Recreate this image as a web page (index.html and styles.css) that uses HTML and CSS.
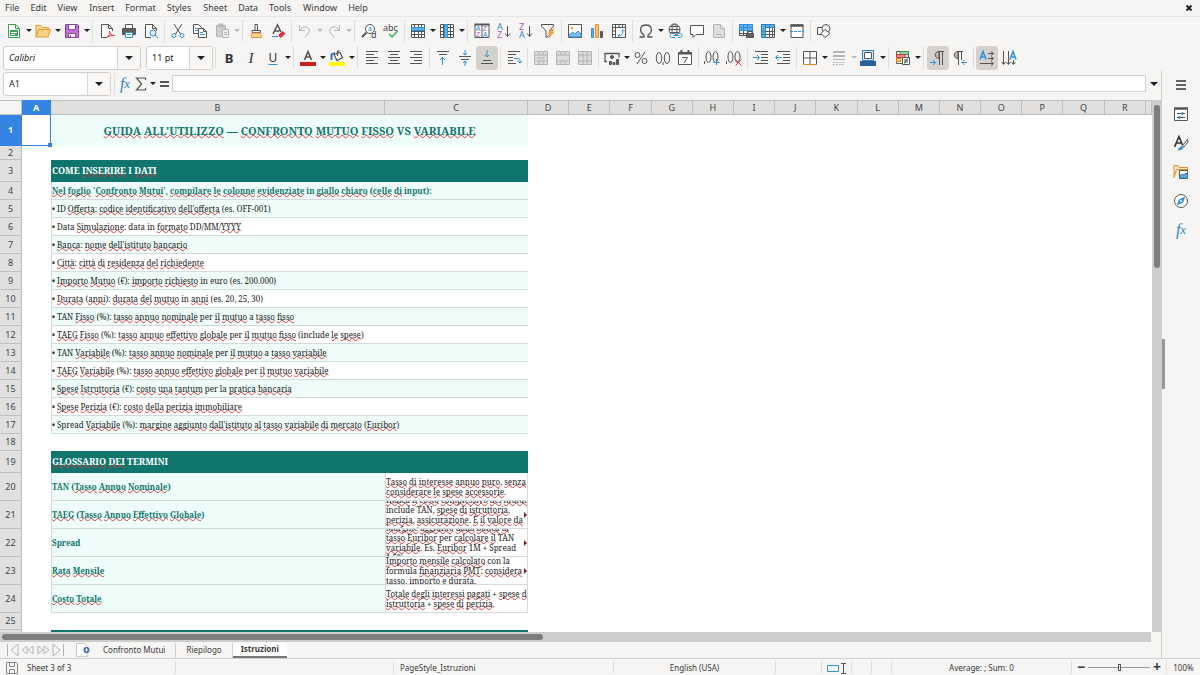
FILE: index.html
```html
<!DOCTYPE html>
<html lang="it">
<head>
<meta charset="utf-8">
<title>Istruzioni</title>
<link rel="stylesheet" href="styles.css">
</head>
<body>
<div class="app">
<header class="top">
<nav class="menu">
<button>File</button><button>Edit</button><button>View</button><button>Insert</button><button>Format</button><button>Styles</button><button>Sheet</button><button>Data</button><button>Tools</button><button>Window</button><button>Help</button>
<button class="close" aria-label="Close"><svg viewBox="0 0 8 8" class="x8"><path class="heavy" d="M1.5 1.5l5 5M6.5 1.5l-5 5"/></svg></button>
</nav>

<div class="bar">
<button class="ic" aria-label="New"><svg viewBox="0 0 16 16"><path stroke="#3a9a50" fill="#fff" d="M2.500 1.500h7l4 4v9h-11z"/><path stroke="#3a9a50" d="M9.500 1.500v4h4"/><path fill="#43a85a" stroke="#3a9a50" d="M4.500 7.500h7v5h-7z"/><path stroke="#fff" d="M5 9.500h6M5 11.500h4"/></svg></button><button class="drop" aria-label="New options"></button>
<button class="ic" aria-label="Open"><svg viewBox="0 0 16 16"><path stroke="#e39a3b" fill="#fbd58e" d="M1 14V2.500h5l1.500 2h6V7"/><path stroke="#e39a3b" fill="#f9d083" d="M1 14l2.500-7.500h12L13 14z"/></svg></button><button class="drop" aria-label="Open options"></button>
<button class="ic" aria-label="Save"><svg viewBox="0 0 16 16"><path stroke="#8d43a0" fill="#c273d2" d="M1.500 1.500h12l1 1v12h-13z"/><path stroke="#8d43a0" fill="#fff" d="M4.500 1.500h7v5h-7zM4.500 10.500h7v4h-7z"/><path stroke="#8d43a0" d="M6.500 12v2"/></svg></button><button class="drop" aria-label="Save options"></button>
<i class="sep wide"></i>
<button class="ic" aria-label="Export as PDF"><svg viewBox="0 0 16 16"><path fill="#fff" d="M8 14.500H2.500v-13h7l4 4V8M9.500 1.500v4h4"/><path stroke="#de3541" d="M7.500 14.500c3-2 3.500-4 3-6.500 0 3 2 4.500 5 4.500-3 0-6 .5-8 2"/></svg></button>
<button class="ic" aria-label="Print"><svg viewBox="0 0 16 16"><path fill="#fff" d="M4.500 5V1.500h7V5"/><path fill="#5a5f63" d="M1.500 5.500h13v6h-13z"/><path stroke="#2f92d6" fill="#fff" d="M4.500 9.500h7v5h-7zM6 11.500h4"/></svg></button>
<button class="ic" aria-label="Print preview"><svg viewBox="0 0 16 16"><path fill="#fff" d="M8 14.500H2.500v-13h7l4 4V8M9.500 1.500v4h4"/><circle cx="10" cy="10" r="3" stroke="#2f92d6" fill="#d7ebf9"/><path class="b" d="M12 12l3 3"/></svg></button>
<i class="sep"></i>
<button class="ic" aria-label="Cut"><svg viewBox="0 0 16 16"><path d="M4 1l6.500 10M12 1L5.500 11"/><circle class="b" cx="4" cy="12.500" r="2"/><circle class="b" cx="12" cy="12.500" r="2"/></svg></button>
<button class="ic" aria-label="Copy"><svg viewBox="0 0 16 16"><path fill="#fff" d="M1.500 1.500h5l3 3v6h-8z"/><path class="b" d="M3 5.500h3M3 7.500h3"/><path fill="#fff" d="M6.500 5.500h5l3 3v6h-8zM11.500 5.500v3h3"/><path class="b" d="M8 9.500h3M8 11.500h5"/></svg></button>
<button class="ic" aria-label="Paste"><svg viewBox="0 0 16 16"><path class="g" fill="#cfcfcf" d="M2.500 2.500h9v11h-9zM5 1h4v3H5z"/><path class="g" fill="#eee" d="M8.500 6.500h6v8h-6zM10 9.500h3M10 11.500h3"/></svg></button><button class="drop off" aria-label="Paste options"></button>
<i class="sep"></i>
<button class="ic" aria-label="Clone formatting"><svg viewBox="0 0 16 16"><path d="M7 7V1.500h2.500V7M4 9.500V7.500h8.500v2z"/><path stroke="#e39a3b" fill="#fbd58e" d="M4 10h8.500l1 4.500H3z"/></svg></button>
<button class="ic" aria-label="Clear formatting"><svg viewBox="0 0 16 16"><path stroke-width="1.500" d="M3 11L7.500 2 11 9M4.500 8h5"/><path class="b" d="M2 13.500h6"/><path fill="#de3541" stroke="#de3541" d="M8.500 12.500l4-4 2.500 2-4 4z"/></svg></button>
<i class="sep"></i>
<button class="ic" aria-label="Undo"><svg viewBox="0 0 16 16"><path class="g" d="M2.500 2v5.500H8M3 7c2.500-4 7.500-4 9-1 1 3-1 5-4 8"/></svg></button><button class="drop off" aria-label="Undo options"></button>
<button class="ic" aria-label="Redo"><svg viewBox="0 0 16 16"><path class="g" d="M13.500 2v5.500H8M13 7c-2.500-4-7.500-4-9-1-1 3 1 5 4 8"/></svg></button><button class="drop off" aria-label="Redo options"></button>
<i class="sep wide"></i>
<button class="ic" aria-label="Find and replace"><svg viewBox="0 0 16 16"><circle cx="9" cy="6" r="4.500" fill="#fff"/><path stroke-width="2" d="M5.500 9.500L1 14"/><text x="7" y="8" class="tb s">a</text><text x="10" y="15" class="tk">d</text></svg></button>
<button class="ic" aria-label="Spelling"><svg viewBox="0 0 16 16"><text x="0" y="8" class="tk">abc</text><path stroke="#3cae60" stroke-width="1.500" d="M6 11l3 3 5.500-6"/></svg></button>
<i class="sep"></i>
<button class="ic" aria-label="Row"><svg viewBox="0 0 16 16"><path fill="#fff" d="M1.500 1.500h13v13h-13z"/><path d="M1.500 4.500h13M1.500 8.500h13M1.500 11.500h13M4.500 1.500v13M8.500 1.500v13M11.500 1.500v13"/><path fill="#5db1ea" stroke="#2f92d6" d="M1.500 4.500h13v3h-13z"/></svg></button><button class="drop" aria-label="Row options"></button>
<button class="ic" aria-label="Column"><svg viewBox="0 0 16 16"><path fill="#fff" d="M1.500 1.500h13v13h-13z"/><path d="M1.500 4.500h13M1.500 8.500h13M1.500 11.500h13M4.500 1.500v13M8.500 1.500v13M11.500 1.500v13"/><path fill="#5db1ea" stroke="#2f92d6" d="M5.500 1.500h3v13h-3z"/></svg></button><button class="drop" aria-label="Column options"></button>
<i class="sep wide"></i>
<button class="ic" aria-label="Sort"><svg viewBox="0 0 16 16"><path fill="#fff" d="M1 1.500h14v13H1z"/><path stroke-width="2" d="M.5 1.500h15"/><path d="M8 2v12"/><text x="2" y="8" class="tb s">A</text><text x="2" y="14" class="tp s">Z</text><text x="9" y="8" class="tp s">Z</text><text x="9" y="14" class="tb s">A</text></svg></button>
<button class="ic" aria-label="Sort ascending"><svg viewBox="0 0 16 16"><text x="1" y="7" class="tb">A</text><text x="1" y="15" class="tp">Z</text><path d="M11.500 3v10M9 10.500l2.500 3 2.500-3"/></svg></button>
<button class="ic" aria-label="Sort descending"><svg viewBox="0 0 16 16"><text x="1" y="7" class="tp">Z</text><text x="1" y="15" class="tb">A</text><path d="M11.500 3v10M9 10.500l2.500 3 2.500-3"/></svg></button>
<button class="ic" aria-label="AutoFilter"><svg viewBox="0 0 16 16"><path d="M1.500 1.500h12v1.500L9 8M1.500 1.500V3L6 8v6.500l3-2"/><path fill="#f5a742" stroke="#e38b2b" stroke-width=".5" d="M11 6l-3 5h2l-1 4 5-6h-2l2-3z"/></svg></button>
<i class="sep"></i>
<button class="ic" aria-label="Image"><svg viewBox="0 0 16 16"><path fill="#fff" d="M1.500 1.500h13v13h-13z"/><path fill="#7fc0ec" stroke="#2f92d6" d="M2 14v-2l4-3 2 2 3-3 3 3v3z"/><circle cx="5" cy="5" r="1" fill="#f5a742" stroke="#f5a742"/></svg></button>
<button class="ic" aria-label="Chart"><svg viewBox="0 0 16 16"><path fill="#5db1ea" stroke="#2f92d6" d="M2.500 5.500h2v9h-2z"/><path fill="#fbc57a" stroke="#e38b2b" d="M6.500 1.500h3v13h-3z"/><path fill="#666" d="M11.500 8.500h2v6h-2z"/></svg></button>
<button class="ic" aria-label="Pivot table"><svg viewBox="0 0 16 16"><path fill="#fff" d="M1.500 1.500h13v13h-13z"/><path d="M1.500 4.500h13M4.500 1.500v13M8 1.500v3M11.500 1.500v3M1.500 8h3M1.500 11.500h3"/><path class="b" d="M7 13c4 0 5-2 5-6M10 8.500L12 6.500l2 2M9 11l-2 2 2 2"/></svg></button>
<i class="sep"></i>
<button class="ic" aria-label="Special character"><svg viewBox="0 0 16 16"><path stroke-width="1.300" d="M1.500 14H6v-2C1 9 1.500 2 8 2s7 7 2 10v2h4.500"/></svg></button><button class="drop" aria-label="Special character options"></button>
<button class="ic" aria-label="Hyperlink"><svg viewBox="0 0 16 16"><circle cx="7.500" cy="6.500" r="5.500"/><ellipse cx="7.500" cy="6.500" rx="2.500" ry="5.500"/><path d="M2 6.500h11M3 3.500h9M3 9.500h9"/><path class="b" fill="#f6f5f4" d="M8 10.500H4.500c-2 0-2 4 0 4H8M11 10.500h2.500c2 0 2 4 0 4H11M6.500 12.500h6"/></svg></button>
<button class="ic" aria-label="Comment"><svg viewBox="0 0 16 16"><path fill="#fff" d="M1.500 2.500h13v9H7l-3 3v-3H1.500z"/></svg></button>
<button class="ic" aria-label="Headers and footers"><svg viewBox="0 0 16 16"><path class="g" fill="#ddd" d="M2.500 1.500h7l4 4v9h-11zM9.500 1.500v4h4M5 11.500h6"/></svg></button>
<i class="sep"></i>
<button class="ic" aria-label="Define print area"><svg viewBox="0 0 16 16"><path fill="#fff" d="M1.500 1.500h13v11h-13z"/><path d="M1.500 10.500h13M5.500 2v10M9.500 2v10"/><path fill="#5db1ea" stroke="#2f92d6" d="M1.500 1.500h13v6h-13zM5.500 2v5M9.500 2v5M1.500 4.500h13"/><path fill="#666" d="M8.500 10.500h7v4h-7z"/><path fill="#fff" d="M10 8.500h4v2h-4z"/></svg></button>
<button class="ic" aria-label="Freeze rows and columns"><svg viewBox="0 0 16 16"><path fill="#fff" d="M1.500 1.500h13v13h-13z"/><path d="M6 8.500h8M6 11.500h8M9.500 5v9M12.500 5v9"/><path fill="#5db1ea" stroke="#2f7fc0" d="M1.500 1.500h13v3h-9v10h-4z"/><path stroke="#2f7fc0" d="M5.500 2v3M9.500 2v3M1.500 8h4M1.500 11.500h4"/></svg></button><button class="drop" aria-label="Freeze options"></button>
<button class="ic" aria-label="Split window"><svg viewBox="0 0 16 16"><path fill="#fff" d="M2 2v12.500h12V2z"/><path stroke-width="2.500" d="M1.500 2.500h13"/><path class="b" stroke-dasharray="3 1" d="M1 8.500h14"/></svg></button>
<i class="sep"></i>
<button class="ic" aria-label="Show draw functions"><svg viewBox="0 0 16 16"><path d="M6 11.500H1.500v-7H6"/><circle cx="10" cy="5.500" r="4"/><path fill="#f6f5f4" d="M9 6.500l5 4-5 4-4-4z"/></svg></button>
</div>

<div class="bar">
<div class="combo font"><input value="Calibri" aria-label="Font name"><button aria-label="Font list"></button></div>
<div class="combo size"><input value="11 pt" aria-label="Font size"><button aria-label="Size list"></button></div>
<i class="sep"></i>
<button class="ic bold" aria-label="Bold">B</button>
<button class="ic ital" aria-label="Italic">I</button>
<button class="ic und" aria-label="Underline">U</button><button class="drop" aria-label="Underline options"></button>
<i class="sep wide"></i>
<button class="ic" aria-label="Font color"><svg viewBox="0 0 16 16"><path stroke-width="1.600" d="M4.500 10L8 1.500 11.500 10M5.500 7h5"/><path fill="#c9211e" stroke="none" d="M0 12h16v4H0z"/></svg></button><button class="drop" aria-label="Font color options"></button>
<button class="ic" aria-label="Highlighting"><svg viewBox="0 0 16 16"><path stroke-width="1.300" fill="#fff" d="M5 4.500l6-2 2.500 5-5.500 3z"/><path stroke-width="1.300" d="M8.500 6V1.500l2-1"/><path stroke="#2f7fc0" stroke-width="2" d="M2.500 10V4.500L6 3"/><path fill="#ff0" stroke="none" d="M0 12h16v4H0z"/></svg></button><button class="drop" aria-label="Highlighting options"></button>
<i class="sep wide"></i>
<button class="ic" aria-label="Align left"><svg viewBox="0 0 16 16"><path d="M2 1.500h12M2 4.500h8M2 7.500h12M2 10.500h8M2 13.500h12"/></svg></button>
<button class="ic" aria-label="Align center"><svg viewBox="0 0 16 16"><path d="M2 1.500h12M4 4.500h8M2 7.500h12M4 10.500h8M2 13.500h12"/></svg></button>
<button class="ic" aria-label="Align right"><svg viewBox="0 0 16 16"><path d="M2 1.500h12M6 4.500h8M2 7.500h12M6 10.500h8M2 13.500h12"/></svg></button>
<i class="sep"></i>
<button class="ic" aria-label="Align top"><svg viewBox="0 0 16 16"><path d="M2 1.500h12M4 4.500h8"/><path class="b" d="M7.500 15V7.500M5 10l2.500-2.500L10 10"/></svg></button>
<button class="ic" aria-label="Center vertically"><svg viewBox="0 0 16 16"><path d="M2 6.500h12M4 9.500h8"/><path class="b" d="M8 0v4.500M6 3l2 2 2-2M8 16v-4.500M6 13l2-2 2 2"/></svg></button>
<button class="ic on" aria-label="Align bottom"><svg viewBox="0 0 16 16"><path d="M4 10.500h8M2 13.500h12"/><path class="b" d="M8 0v7M6 5l2 2 2-2"/></svg></button>
<i class="sep"></i>
<button class="ic" aria-label="Wrap text"><svg viewBox="0 0 16 16"><path d="M2 1.500h12M2 4.500h8M2 7.500h5M2 10.500h5M2 13.500h8"/><path class="b" d="M8 8.500h4c2 0 2 1 2 4M11.500 11l2.500 2 2-2"/></svg></button>
<i class="sep"></i>
<button class="ic" aria-label="Merge and center"><svg viewBox="0 0 16 16"><path class="g" fill="#ddd" d="M1.500 1.500h13v13h-13zM1.500 5h13M1.500 11h13M6 2v3M10 2v3M6 11v3M10 11v3M4 8h8"/></svg></button>
<button class="ic" aria-label="Merge cells"><svg viewBox="0 0 16 16"><path class="g" fill="#ddd" d="M1.500 1.500h13v13h-13zM1.500 5h13M1.500 11h13M6 2v3M10 2v3M6 11v3M10 11v3"/></svg></button>
<button class="ic" aria-label="Unmerge cells"><svg viewBox="0 0 16 16"><path class="g" fill="#ddd" d="M1.500 1.500h13v13h-13zM1.500 5h13M1.500 11h13M6 2v12M10 2v12"/></svg></button>
<i class="sep"></i>
<button class="ic" aria-label="Currency"><svg viewBox="0 0 16 16"><path stroke-width="1.300" d="M3 11.500H1v-8h14v4"/><circle cx="8" cy="7" r="1.500" fill="#555"/><path fill="#666" d="M5.500 11.500h2v3h-2zM9 12.500h2v2H9zM12.500 9.500h2v5h-2z"/></svg></button><button class="drop" aria-label="Currency options"></button>
<button class="ic" aria-label="Percent"><svg viewBox="0 0 16 16"><circle cx="4.500" cy="5" r="2.500"/><circle cx="11.500" cy="11" r="2.500"/><path d="M12 2L4 14"/></svg></button>
<button class="ic" aria-label="Number"><svg viewBox="0 0 16 16"><ellipse cx="4" cy="8" rx="2.700" ry="5.500"/><ellipse cx="12" cy="8" rx="2.700" ry="5.500"/><path d="M8 12v3"/></svg></button>
<button class="ic" aria-label="Date"><svg viewBox="0 0 16 16"><path fill="#fff" d="M1.500 2.500h13v12h-13z"/><path stroke-width="2" d="M1 3.500h14M4.500 0v3M11.500 0v3"/><path d="M5 7.500h5.500L7 13"/></svg></button>
<i class="sep"></i>
<button class="ic" aria-label="Add decimal place"><svg viewBox="0 0 16 16"><path d="M.5 11v3"/><ellipse cx="4.500" cy="7" rx="2.500" ry="5.500"/><ellipse cx="11.500" cy="7" rx="2.500" ry="5.500"/><path class="b" d="M12.500 9v6M9.500 12.500h6"/></svg></button>
<button class="ic" aria-label="Delete decimal place"><svg viewBox="0 0 16 16"><path d="M.5 11v3"/><ellipse cx="4.500" cy="7" rx="2.500" ry="5.500"/><ellipse cx="11.500" cy="7" rx="2.500" ry="5.500"/><path stroke="#de3541" d="M9.500 9.500l6 6M15.500 9.500l-6 6"/></svg></button>
<i class="sep"></i>
<button class="ic" aria-label="Increase indent"><svg viewBox="0 0 16 16"><path d="M2 1.500h13M8 4.500h7M8 7.500h7M8 10.500h7M2 13.500h13"/><path class="b" d="M0 7.500h6M4 5l2.500 2.500L4 10"/></svg></button>
<button class="ic" aria-label="Decrease indent"><svg viewBox="0 0 16 16"><path d="M2 1.500h13M8 4.500h7M8 7.500h7M8 10.500h7M2 13.500h13"/><path class="b" d="M1 7.500h6M3 5L.500 7.500 3 10"/></svg></button>
<i class="sep"></i>
<button class="ic" aria-label="Borders"><svg viewBox="0 0 16 16"><path fill="#fff" d="M1.500 1.500h13v13h-13z"/><path d="M8 2v12M2 8h12"/><path stroke="#e38b2b" d="M1 14.500h14"/></svg></button><button class="drop" aria-label="Border options"></button>
<button class="ic" aria-label="Border style"><svg viewBox="0 0 16 16"><path class="g" stroke-width="2" d="M2 2h12M2 6h12"/><path class="g" d="M2 9.500h12"/><path class="g" stroke-dasharray="2 1" d="M2 12.500h12M2 14.500h12"/></svg></button><button class="drop off" aria-label="Border style options"></button>
<button class="ic" aria-label="Border color"><svg viewBox="0 0 16 16"><path stroke="#2f7fc0" fill="#d7ebf9" d="M2.500 .5h11v10h-11z"/><path stroke="#555" fill="#fff" d="M4.500 2.500h7v6h-7z"/><path fill="#2a6099" stroke="none" d="M0 11h16v5H0z"/></svg></button><button class="drop" aria-label="Border color options"></button>
<i class="sep wide"></i>
<button class="ic" aria-label="Conditional formatting"><svg viewBox="0 0 16 16"><path fill="#fff" d="M1.500 1.500h12v12h-12z"/><path fill="#8ed6a0" stroke="#3a9a50" d="M5 1.500h8.500v3H5z"/><path fill="#f08a8a" stroke="#de3541" d="M1.500 4.500H10v3H1.500z"/><path fill="#fbc57a" stroke="#e38b2b" d="M1.500 8.500H6v3H1.500z"/><path fill="#fff" d="M7.500 7.500h7v7h-7z"/><path d="M9 10h4M9 12h4M12.500 8.500l-3 5"/></svg></button><button class="drop" aria-label="Conditional options"></button>
<i class="sep wide"></i>
<button class="ic on" aria-label="Left to right"><svg viewBox="0 0 16 16"><path fill="#bbb" d="M9 8.500c-5 0-5-7 0-7V9"/><path d="M8 1.500h6M9.500 2v13M12.500 2v13"/><path class="b" d="M0 12.500h5M3 10l2.500 2.500L3 15"/></svg></button>
<button class="ic" aria-label="Right to left"><svg viewBox="0 0 16 16"><path fill="#bbb" d="M6 8.500c-5 0-5-7 0-7V9"/><path d="M5 1.500h6M6.500 2v13M9.500 2v8"/><path class="b" d="M10 12.500h5M12.500 10L10 12.500l2.500 2.500"/></svg></button>
<i class="sep"></i>
<button class="ic on" aria-label="Horizontal text"><svg viewBox="0 0 16 16"><path class="b" stroke-width="1.500" d="M1 9.500L4 1.500l3 8M2 7h4"/><path d="M9 3.500h5M12 1.500l2.500 2-2.500 2M9 8.500h5M12 6.500l2.500 2-2.500 2M1 13.500h13M12 11.500l2.500 2-2.500 2"/></svg></button>
<button class="ic" aria-label="Vertical text"><svg viewBox="0 0 16 16"><path class="b" stroke-width="1.500" d="M9 9.500l3-8 3 8M10 7h4"/><path d="M2.500 1v13M.500 12l2 2.500 2-2.500M7.500 1v13M5.500 12l2 2.500 2-2.500M12.500 10v4M10.500 12l2 2.500 2-2.500"/></svg></button>
</div>
</header>

<div class="work">
<main class="doc">
<div class="fbar">
<div class="combo name"><input value="A1" aria-label="Name box"><button aria-label="Names list"></button></div>
<i class="sep"></i>
<button class="ic fx nar" aria-label="Function wizard">f<sub>x</sub></button>
<button class="ic nar" aria-label="Select function"><svg viewBox="0 0 16 16"><path stroke-width="1.200" d="M12.500 4V2h-9l5 6-5 6h9v-2"/></svg></button><button class="drop" aria-label="Function options"></button>
<button class="ic nar" aria-label="Formula"><svg viewBox="0 0 16 16"><path stroke-width="2" d="M4 6h9M4 10h9"/></svg></button>
<input class="formula" aria-label="Input line">
<button class="drop big" aria-label="Expand formula bar"></button>
</div>

<div class="view">
<div class="grid">
<table>
<colgroup><col class="c-h"><col class="c-a"><col class="c-b"><col class="c-c"><col span="15"><col class="c-s"></colgroup>
<thead><tr><th class="corner"></th><th class="cur">A</th><th>B</th><th>C</th><th>D</th><th>E</th><th>F</th><th>G</th><th>H</th><th>I</th><th>J</th><th>K</th><th>L</th><th>M</th><th>N</th><th>O</th><th>P</th><th>Q</th><th>R</th><th></th></tr></thead>
<tbody>
<tr class="r-title"><th class="cur">1</th><td class="sel"></td><td colspan="2" class="title"><u>GUIDA</u> <u>ALL'UTILIZZO</u> — <u>CONFRONTO</u> <u>MUTUO</u> <u>FISSO</u> VS <u>VARIABILE</u></td></tr>
<tr class="r-gap"><th>2</th></tr>
<tr class="r-sec"><th>3</th><td></td><td colspan="2" class="sec">COME <u>INSERIRE</u> I <u>DATI</u></td></tr>
<tr><th>4</th><td></td><td colspan="2" class="line tint lead"><u>Nel</u> <u>foglio</u> '<u>Confronto</u> <u>Mutui</u>', <u>compilare</u> <u>le</u> <u>colonne</u> <u>evidenziate</u> in <u>giallo</u> <u>chiaro</u> (<u>celle</u> <u>di</u> input):</td></tr>
<tr><th>5</th><td></td><td colspan="2" class="line tint">• ID <u>Offerta</u>: <u>codice</u> <u>identificativo</u> <u>dell'offerta</u> (es. OFF-001)</td></tr>
<tr><th>6</th><td></td><td colspan="2" class="line">• Data <u>Simulazione</u>: data in <u>formato</u> DD/MM/<u>YYYY</u></td></tr>
<tr><th>7</th><td></td><td colspan="2" class="line tint">• <u>Banca</u>: <u>nome</u> <u>dell'istituto</u> <u>bancario</u></td></tr>
<tr><th>8</th><td></td><td colspan="2" class="line">• <u>Città</u>: <u>città</u> <u>di</u> <u>residenza</u> <u>del</u> <u>richiedente</u></td></tr>
<tr><th>9</th><td></td><td colspan="2" class="line tint">• <u>Importo</u> <u>Mutuo</u> (€): <u>importo</u> <u>richiesto</u> in euro (es. 200.000)</td></tr>
<tr><th>10</th><td></td><td colspan="2" class="line">• <u>Durata</u> (<u>anni</u>): <u>durata</u> <u>del</u> <u>mutuo</u> in <u>anni</u> (es. 20, 25, 30)</td></tr>
<tr><th>11</th><td></td><td colspan="2" class="line tint">• TAN <u>Fisso</u> (%): <u>tasso</u> <u>annuo</u> <u>nominale</u> per <u>il</u> <u>mutuo</u> a <u>tasso</u> <u>fisso</u></td></tr>
<tr><th>12</th><td></td><td colspan="2" class="line">• <u>TAEG</u> <u>Fisso</u> (%): <u>tasso</u> <u>annuo</u> <u>effettivo</u> <u>globale</u> per <u>il</u> <u>mutuo</u> <u>fisso</u> (include <u>le</u> <u>spese</u>)</td></tr>
<tr><th>13</th><td></td><td colspan="2" class="line tint">• TAN <u>Variabile</u> (%): <u>tasso</u> <u>annuo</u> <u>nominale</u> per <u>il</u> <u>mutuo</u> a <u>tasso</u> <u>variabile</u></td></tr>
<tr><th>14</th><td></td><td colspan="2" class="line">• <u>TAEG</u> <u>Variabile</u> (%): <u>tasso</u> <u>annuo</u> <u>effettivo</u> <u>globale</u> per <u>il</u> <u>mutuo</u> <u>variabile</u></td></tr>
<tr><th>15</th><td></td><td colspan="2" class="line tint">• <u>Spese</u> <u>Istruttoria</u> (€): <u>costo</u> <u>una</u> <u>tantum</u> per la <u>pratica</u> <u>bancaria</u></td></tr>
<tr><th>16</th><td></td><td colspan="2" class="line">• <u>Spese</u> <u>Perizia</u> (€): <u>costo</u> <u>della</u> <u>perizia</u> <u>immobiliare</u></td></tr>
<tr><th>17</th><td></td><td colspan="2" class="line tint">• Spread <u>Variabile</u> (%): <u>margine</u> <u>aggiunto</u> <u>dall'istituto</u> <u>al</u> <u>tasso</u> <u>variabile</u> <u>di</u> <u>mercato</u> (<u>Euribor</u>)</td></tr>
<tr class="r-free"><th>18</th></tr>
<tr class="r-sec"><th>19</th><td></td><td colspan="2" class="sec"><u>GLOSSARIO</u> <u>DEI</u> TERMINI</td></tr>
<tr class="r-term"><th>20</th><td></td><td class="line tint lead">TAN (<u>Tasso</u> <u>Annuo</u> <u>Nominale</u>)</td><td class="line def"><div><p><u>Tasso</u> <u>di</u> <u>interesse</u> <u>annuo</u> <u>puro</u>, <u>senza</u><br><u>considerare</u> <u>le</u> <u>spese</u> <u>accessorie</u>.</p></div></td></tr>
<tr class="r-term"><th>21</th><td></td><td class="line tint lead"><u>TAEG</u> (<u>Tasso</u> <u>Annuo</u> <u>Effettivo</u> <u>Globale</u>)</td><td class="line def more"><div><p><u>Indica</u> <u>il</u> <u>costo</u> <u>complessivo</u> <u>del</u> <u>mutuo</u>:<br>include TAN, <u>spese</u> <u>di</u> <u>istruttoria</u>,<br><u>perizia</u>, <u>assicurazione</u>. <u>È</u> <u>il</u> <u>valore</u> <u>da</u><br><u>confrontare</u>.</p></div></td></tr>
<tr class="r-term"><th>22</th><td></td><td class="line tint lead">Spread</td><td class="line def more"><div><p><u>Margine</u> <u>aggiunto</u> <u>dalla</u> <u>banca</u> <u>al</u><br><u>tasso</u> <u>Euribor</u> per <u>calcolare</u> <u>il</u> TAN<br><u>variabile</u>. Es. <u>Euribor</u> 1M + Spread<br>1,5%.</p></div></td></tr>
<tr class="r-term"><th>23</th><td></td><td class="line tint lead"><u>Rata</u> <u>Mensile</u></td><td class="line def more"><div><p><u>Importo</u> <u>mensile</u> <u>calcolato</u> con la<br>formula <u>finanziaria</u> <u>PMT</u>: <u>considera</u><br><u>tasso</u>, <u>importo</u> e <u>durata</u>.</p></div></td></tr>
<tr class="r-term"><th>24</th><td></td><td class="line tint lead"><u>Costo</u> <u>Totale</u></td><td class="line def"><div><p><u>Totale</u> <u>degli</u> <u>interessi</u> <u>pagati</u> + <u>spese</u> <u>di</u><br><u>istruttoria</u> + <u>spese</u> <u>di</u> <u>perizia</u>.</p></div></td></tr>
<tr class="r-free"><th>25</th></tr>
<tr class="r-sec"><th></th><td></td><td colspan="2" class="sec"></td></tr>
</tbody>
</table>
</div>
<div class="vscroll"><i></i></div>
</div>
<div class="hscroll"><i></i></div>
<div class="tabs">
<button aria-label="First sheet"><svg viewBox="0 0 16 16"><path class="g" d="M2.500 2v12M13 2L6 8l7 6V2z"/></svg></button>
<button aria-label="Previous sheet"><svg viewBox="0 0 16 16"><path class="g" d="M7 4L2 8l5 4zM13 4L8 8l5 4z"/></svg></button>
<button aria-label="Next sheet"><svg viewBox="0 0 16 16"><path class="g" d="M3 4l5 4-5 4zM9 4l5 4-5 4z"/></svg></button>
<button aria-label="Last sheet"><svg viewBox="0 0 16 16"><path class="g" d="M13.500 2v12M3 2l7 6-7 6V2z"/></svg></button>
<button class="add" aria-label="Add sheet"><svg viewBox="0 0 16 16"><path fill="#fff" stroke="#ccc" d="M.5 1.500h8l3 3v10H.5z"/><circle cx="10.500" cy="8" r="3" fill="#2a5fb4" stroke="none"/><path stroke="#fff" d="M10.500 6v4M8.500 8h4"/></svg></button>
<button class="tab">Confronto Mutui</button><button class="tab">Riepilogo</button><button class="tab active">Istruzioni</button>
</div>
</main>
<div class="split"><i></i></div>
<aside class="side">
<button class="ic" aria-label="Sidebar settings"><svg viewBox="0 0 16 16"><path stroke="#333" stroke-width="1.500" d="M3 4h10M3 8h10M3 12h10"/></svg></button>
<button class="ic" aria-label="Properties"><svg viewBox="0 0 16 16"><path fill="#fff" d="M1.500 2.500h13v12h-13z"/><path stroke-width="2.500" d="M1 2.500h14"/><path d="M4 7.500h8M4 11.500h8"/><path class="b" stroke-width="1.500" d="M9.500 6v3M6.500 10v3"/></svg></button>
<button class="ic" aria-label="Styles"><svg viewBox="0 0 16 16"><path stroke="#333" stroke-width="1.600" d="M1.500 12L6 1.500 9.500 10M3.500 8h5"/><path d="M14.500 4.500l-5 6 1.500 1.500 4-5z"/><path class="b" fill="#2f92d6" d="M5 15c3 0 5-1 5-3-2-1-3 0-5 3z"/></svg></button>
<button class="ic" aria-label="Gallery"><svg viewBox="0 0 16 16"><path stroke="#e38b2b" fill="#fdebd0" d="M1 13.500v-12h4l1.500 2h8V7M1 13.500L3.500 5.500h11"/><path fill="#fff" d="M6.500 6.500h8v8h-8z"/><path fill="#5db1ea" stroke="#2f7fc0" d="M7 14v-2l2-2 2 1 2-2 1.500 2v3z"/></svg></button>
<button class="ic" aria-label="Navigator"><svg viewBox="0 0 16 16"><circle cx="8" cy="8" r="6.500" fill="#fff"/><path class="b" fill="#2f92d6" d="M11.500 4.500l-2 5-5 2 2-5z"/><circle cx="8" cy="8" r="1" fill="#fff" stroke="none"/></svg></button>
<button class="ic fx" aria-label="Functions">f<sub>x</sub></button>
</aside>
</div>

<footer class="status">
<span class="save"><svg viewBox="0 0 16 16"><path stroke="#888" d="M2.500 2.500h10l1 1v10h-11zM5.500 2.500v4h5v-4M5.500 13.500v-4h5v4"/></svg></span>
<span class="s-sheet">Sheet 3 of 3</span>
<span class="s-blank"></span>
<span class="s-page">PageStyle_Istruzioni</span>
<span class="s-lang">English (USA)</span>
<span class="s-gap"></span>
<span class="s-mode"><svg viewBox="0 0 24 16"><path class="b" d="M2.500 5.500h11v6h-11z"/><path d="M16 3.500h5M16 13.500h5M18.500 4v9"/></svg></span>
<span class="s-sm"></span><span class="s-sm"></span>
<span class="s-sum">Average: ; Sum: 0</span>
<span class="s-zoom"><button aria-label="Zoom out">−</button><input type="range" aria-label="Zoom" value="50"><button aria-label="Zoom in">+</button></span>
<span class="s-pct">100%</span>
</footer>
</div>
</body>
</html>
```
FILE: styles.css
```css
* { box-sizing: border-box; }
body {
  margin: 0;
  background: #f6f5f4;
  color: #3a3a3a;
  font: 9px/12px "Noto Sans", sans-serif;
}
button, input { font: inherit; color: inherit; margin: 0; }
button { border: 0; padding: 0; background: none; }
svg {
  display: block;
  flex: none;
  width: 16px;
  height: 16px;
  overflow: visible;
  fill: none;
  stroke: #555;
}
svg .b { stroke: #2f92d6; }
svg .g { stroke: #b4b4b4; }
svg text { stroke: none; font: 9px "Noto Sans", sans-serif; }
svg .tb { fill: #2383c9; }
svg .tp { fill: #b053c0; }
svg .tk { fill: #444; }
svg .s { font-size: 7px; }
svg .heavy { stroke: #222; stroke-width: 2; }
.x8 { width: 8px; height: 8px; }

.app { display: flex; flex-direction: column; height: 100vh; overflow: hidden; }

.menu { display: flex; height: 17px; align-items: center; border-bottom: 1px solid #e6e5e3; }
.menu button { padding: 0 6px 0 5px; line-height: 16px; }
.menu button:nth-child(3n) { padding-right: 7px; }
.menu .close { margin-left: auto; padding: 0 7px; }

.bar { display: flex; height: 27px; align-items: center; padding-left: 3px; }
.ic {
  display: flex;
  flex: none;
  width: 22px;
  height: 24px;
  align-items: center;
  justify-content: center;
  border-radius: 3px;
}
.ic.on { background: #d5d2ce; }
.bold, .ital, .und { font-size: 13px; color: #333; }
.bold { font-weight: bold; }
.ital { font-family: "Liberation Serif", serif; font-style: italic; font-size: 15px; }
.und { font-size: 12px; text-decoration: underline #2f92d6; text-underline-offset: 2px; }
.fx { font: italic 16px/20px "Liberation Serif", serif; color: #2f84c4; }
.fx sub { font-size: 13px; vertical-align: -2px; line-height: 10px; }
.nar { width: 16px; }
.drop {
  display: flex;
  flex: none;
  width: 7px;
  height: 24px;
  align-items: center;
  justify-content: center;
}
.drop::after, .combo button::after {
  content: "";
  border: solid transparent;
  border-width: 3px 3px 0;
  border-top-color: #222;
}
.drop.off::after { border-top-color: #bbb; }
.combo button::after, .drop.big::after { border-width: 4px 4px 0; }
.sep { flex: none; width: 5px; height: 22px; border-left: 1px solid #e2e0de; margin: 0 -2px 0 2px; }
.sep.wide { width: 6px; }

.combo {
  display: flex;
  height: 24px;
  border: 1px solid #d2cfcc;
  border-radius: 3px;
  background: #fff;
  overflow: hidden;
}
.combo input { flex: 1; min-width: 0; border: 0; padding: 0 5px; background: none; color: #222; }
.combo button {
  display: flex;
  width: 23px;
  align-items: center;
  justify-content: center;
  border-left: 1px solid #dbd9d6;
  background: #f8f7f6;
}
.font { width: 138px; margin: 0 5px 0 0; }
.font input { font-style: italic; }
.size { width: 67px; }
.name { width: 108px; margin-right: 1px; }

.work { display: flex; flex: 1; min-height: 0; }
.doc { display: flex; flex-direction: column; flex: 1; min-width: 0; }
.fbar { display: flex; height: 29px; align-items: center; padding: 0 0 4px 3px; flex: none; }
.formula { flex: 1; min-width: 0; height: 17px; border: 1px solid #d5d3d0; background: #fff; padding: 0 3px; }
.drop.big { width: 15px; }

.view { display: flex; flex: 1; min-height: 0; }
.grid { flex: 1; min-width: 0; overflow: hidden; background: #fff; }
table { width: 100%; table-layout: fixed; border-collapse: separate; border-spacing: 0; }
.c-h { width: 22px; }
.c-a { width: 29px; }
.c-b { width: 334px; }
.c-c { width: 143px; }
.c-s { width: 6px; }
th, td { padding: 0; font-weight: normal; }
th {
  background: #e1e0df;
  border: solid #c0bfbd;
  border-width: 0 1px 1px 0;
  color: #444;
  line-height: 12px;
}
thead th { height: 15px; border-top-width: 1px; }
th.corner { background: #f6f5f4; }
th.cur { background: #3584e4; border-color: #3584e4; color: #fff; font-weight: bold; }
tbody tr { height: 18px; }
tbody .r-title { height: 31px; }
tbody .r-gap { height: 14px; }
tbody .r-sec { height: 22px; }
tbody .r-free { height: 17px; }
tbody .r-term { height: 28px; }
td { font: 8px/12px "Noto Serif", "Liberation Serif", serif; white-space: nowrap; color: #222; }
.sel { position: relative; border: solid #3584e4; border-width: 0 1px 1px 0; }
.sel::after {
  content: "";
  position: absolute;
  right: -2px;
  bottom: -2px;
  width: 4px;
  height: 4px;
  background: #3584e4;
}
.title { background: #effdfa; color: #11766c; font-size: 11px; font-weight: bold; text-align: center; }
.sec { background: #10766d; color: #fff; font-size: 9px; font-weight: bold; padding-left: 1px; }
.line { border-bottom: 1px solid #d3dcda; }
.line:nth-child(3) { border-left: 1px solid #d3dcda; }
.tint { background: #effdfa; }
.lead { color: #11766c; font-weight: bold; }
.line.def { position: relative; border-left: 1px solid #d3dcda; border-right: 1px solid #d3dcda; }
.def div { display: flex; height: 27px; align-items: center; overflow: hidden; }
.def p { margin: 0; line-height: 10px; }
.more::after {
  content: "";
  position: absolute;
  right: 0;
  top: 11px;
  border: solid transparent;
  border-width: 3px 0 3px 3px;
  border-left-color: #7a1f2b;
}
u {
  text-decoration: underline wavy #d8393c 1px;
  text-underline-offset: -1px;
  text-decoration-skip-ink: none;
}

.vscroll { width: 9px; background: #cdcdcd; padding: 5px 1px 0 2px; }
.vscroll i { display: block; height: 31%; border-radius: 3px; background: #7d7d7d; }
.hscroll { flex: none; height: 10px; background: #cdcdcd; padding: 2px 0; margin-right: 10px; }
.hscroll i { display: block; height: 6px; width: 47%; margin-left: 2px; border-radius: 3px; background: #7d7d7d; }
.split { display: flex; width: 4px; align-items: center; border-left: 1px solid #d0cecb; }
.split i { flex: 1; height: 50px; margin-top: -2px; background: #999; }

.tabs { display: flex; flex: none; height: 16px; align-items: center; padding-left: 5px; font-size: 8px; }
.tabs button { flex: none; width: 15px; }
.tabs .add { width: 17px; margin: 0 0 0 11px; }
.tabs .tab { width: auto; height: 15px; padding: 0 10px; border-right: 1px solid #d2d0ce; }
.tabs .tab.active { padding: 0 8px; background: #fff; border: 0; border-bottom: 2px solid #777; font-weight: bold; }

.side { display: flex; flex-direction: column; width: 35px; gap: 5px; align-items: center; padding: 2px 3px 0 0; }

.status { display: flex; flex: none; height: 17px; align-items: center; border-top: 1px solid #d2d0ce; font-size: 8px; }
.status > span { flex: none; height: 13px; border-right: 1px solid #e2e0de; line-height: 13px; white-space: nowrap; }
.status > .save { width: 22px; padding-left: 4px; border: 0; margin-top: -2px; }
.s-sheet { width: 154px; padding-left: 5px; }
.s-blank { width: 218px; }
.status > .s-page { flex: 1; padding-left: 6px; }
.s-lang { width: 162px; text-align: center; }
.s-gap { width: 46px; }
.s-mode { width: 30px; }
.s-mode svg { width: 24px; margin: -1px 0 0 3px; }
.s-sm { width: 20px; }
.s-sum { width: 180px; text-align: center; }
.s-zoom { display: flex; width: 95px; align-items: center; padding: 0 5px; gap: 3px; }
.s-zoom button { font-size: 14px; font-weight: bold; line-height: 12px; }
.s-zoom input { appearance: none; flex: 1; min-width: 0; height: 8px; background: linear-gradient(#999, #999) center / 100% 1px no-repeat; }
.s-zoom input::-webkit-slider-thumb { appearance: none; width: 3px; height: 7px; border: 1px solid #555; background: #eee; }
.status > .s-pct { width: 33px; border: 0; text-align: center; }
```
